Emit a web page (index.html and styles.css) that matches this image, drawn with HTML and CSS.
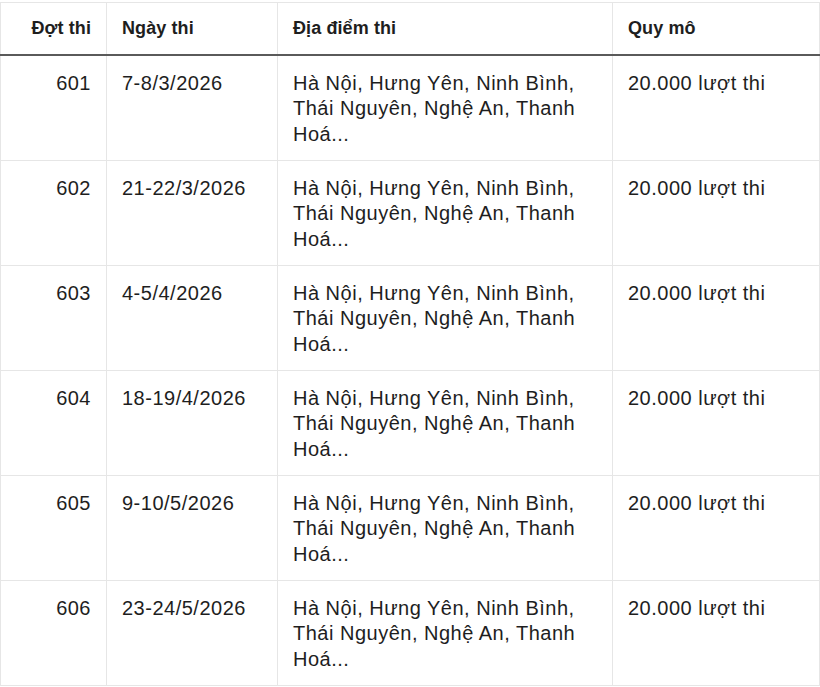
FILE: index.html
```html
<!DOCTYPE html>
<html lang="vi">
<head>
<meta charset="utf-8">
<link rel="stylesheet" href="styles.css">
</head>
<body>
<table class="schedule">
  <colgroup>
    <col class="c1"><col class="c2"><col class="c3"><col class="c4">
  </colgroup>
  <thead>
    <tr><th class="num">Đợt thi</th><th>Ngày thi</th><th>Địa điểm thi</th><th>Quy mô</th></tr>
  </thead>
  <tbody>
    <tr><td class="num">601</td><td>7-8/3/2026</td><td>Hà Nội, Hưng Yên, Ninh Bình, Thái Nguyên, Nghệ An, Thanh Hoá...</td><td>20.000 lượt thi</td></tr>
    <tr><td class="num">602</td><td>21-22/3/2026</td><td>Hà Nội, Hưng Yên, Ninh Bình, Thái Nguyên, Nghệ An, Thanh Hoá...</td><td>20.000 lượt thi</td></tr>
    <tr><td class="num">603</td><td>4-5/4/2026</td><td>Hà Nội, Hưng Yên, Ninh Bình, Thái Nguyên, Nghệ An, Thanh Hoá...</td><td>20.000 lượt thi</td></tr>
    <tr><td class="num">604</td><td>18-19/4/2026</td><td>Hà Nội, Hưng Yên, Ninh Bình, Thái Nguyên, Nghệ An, Thanh Hoá...</td><td>20.000 lượt thi</td></tr>
    <tr><td class="num">605</td><td>9-10/5/2026</td><td>Hà Nội, Hưng Yên, Ninh Bình, Thái Nguyên, Nghệ An, Thanh Hoá...</td><td>20.000 lượt thi</td></tr>
    <tr><td class="num">606</td><td>23-24/5/2026</td><td>Hà Nội, Hưng Yên, Ninh Bình, Thái Nguyên, Nghệ An, Thanh Hoá...</td><td>20.000 lượt thi</td></tr>
  </tbody>
</table>
</body>
</html>
```
FILE: styles.css
```css
html, body {
  margin: 0;
  padding: 0;
  background: #fff;
}
body {
  padding-top: 2px;
  font-family: "Liberation Sans", Arial, sans-serif;
  color: #1e1e1e;
}
.schedule {
  border-collapse: collapse;
  width: 819px;
  table-layout: fixed;
  font-size: 20px;
  line-height: 25.5px;
}
.c1 { width: 106px; }
.c2 { width: 171px; }
.c3 { width: 335px; }
.c4 { width: 207px; }
.schedule th,
.schedule td {
  border: 1px solid #e6e6e6;
  text-align: left;
  vertical-align: top;
  padding: 15px 15px 12.5px 15px;
  letter-spacing: 0.5px;
}
.schedule th {
  font-weight: bold;
  font-size: 18px;
  letter-spacing: 0.1px;
  padding-top: 13px;
  padding-bottom: 12px;
  border-bottom: 2px solid #5a5a5a;
}
.schedule .num {
  text-align: right;
}
```
